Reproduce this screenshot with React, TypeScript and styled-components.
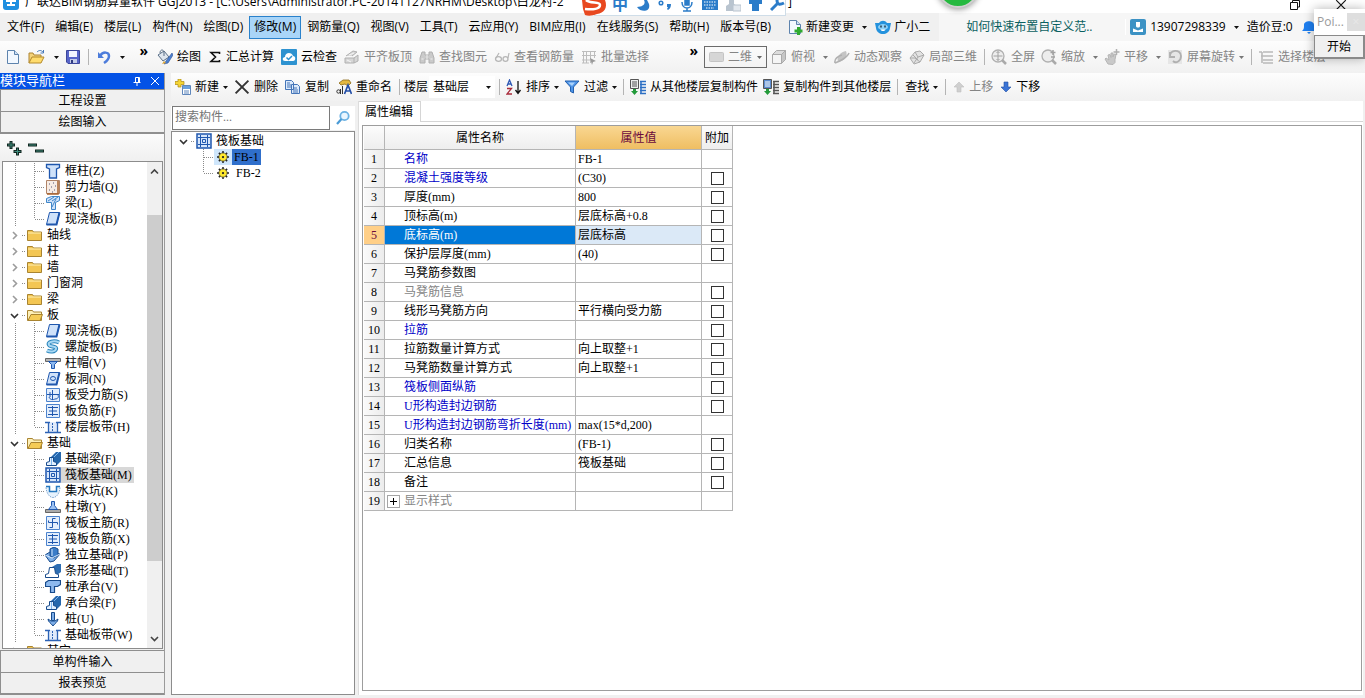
import React from "react";
import styled, { createGlobalStyle, css } from "styled-components";

const UI_FONT = '"Open Sans", "Noto Sans CJK SC", sans-serif';
const SONG_FONT = '"Liberation Serif", "Noto Sans CJK SC", serif';

const GlobalStyle = createGlobalStyle`
  *, *::before, *::after { box-sizing: border-box; }
  body { margin: 0; background: #f0f0f0; color: #000; font: 12px/16px ${UI_FONT}; }
  button, input, select { font: inherit; color: inherit; margin: 0; padding: 0; }
  button { background: none; border: 0; }
  svg { display: block; flex: none; }
`;

/* ---------- shared ---------- */

const Window = styled.div`
  position: relative;
  display: flex;
  flex-direction: column;
  height: 100vh;
  overflow: hidden;
  padding-bottom: 3px;
`;

const Separator = styled.span`
  flex: none;
  width: 1px;
  height: 16px;
  margin: 0 3px;
  background: #b4b4b4;
`;

const Caret = ({ color = "#111" }: { color?: string }) => (
  <svg width="5" height="3" viewBox="0 0 5 3" fill={color}>
    <path d="M0 0h5L2.5 3z" />
  </svg>
);

const Svg = ({ size = 16, children }: { size?: number; children: React.ReactNode }) => (
  <svg width={size} height={size} viewBox="0 0 16 16" fill="none" aria-hidden="true">
    {children}
  </svg>
);

/* ---------- title bar ---------- */

const TitleBar = styled.header`
  display: flex;
  flex: none;
  align-items: flex-end;
  gap: 6px;
  height: 13px;
  padding: 0 18px 2px 3px;
  overflow: hidden;
  background: #fff;
`;

const TitleText = styled.h1`
  flex: 0 0 767px;
  display: flex;
  justify-content: space-between;
  margin: 0;
  font-size: 12px;
  font-weight: 400;
  line-height: 18px;
  white-space: nowrap;
`;

const WindowButtons = styled.div`
  display: flex;
  gap: 34px;
  margin-left: auto;
`;

/* ---------- menu ---------- */

const MenuBar = styled.nav`
  display: flex;
  flex: none;
  align-items: center;
  height: 28px;
  padding-left: 2px;
  background: #f0f0f0;
  white-space: nowrap;
`;

const Menus = styled.div`
  display: flex;
  gap: 1px;
  margin-right: 7px;
`;

const MenuItem = styled.button<{ $active?: boolean }>`
  flex: none;
  height: 23px;
  padding: 0 4px;
  border: 1px solid ${(p) => (p.$active ? "#2a82cc" : "transparent")};
  background: ${(p) => (p.$active ? "#a9d5f8" : "transparent")};
`;

const MenuTool = styled.button`
  display: flex;
  flex: none;
  align-items: center;
  gap: 3px;
  padding: 0 4px;
`;

const AccountArea = styled.div`
  display: flex;
  flex: 1;
  align-items: center;
  align-self: stretch;
  margin-left: 5px;
  background: #f6f6f6;
`;

const HelpLink = styled.a`
  flex: 0 0 187px;
  padding-left: 27px;
  color: #0b6161;
  text-decoration: none;
  border-right: 1px solid #fff;
`;

const Account = styled.div`
  display: flex;
  align-items: center;
  gap: 8px;
  padding-left: 4px;
`;

const AccountName = styled.button`
  display: flex;
  align-items: center;
  gap: 4px;
`;

/* ---------- toolbars ---------- */

const ToolRow = styled.div`
  display: flex;
  flex: none;
  align-items: center;
  height: 32px;
  background: linear-gradient(#fdfdfd, #f1f1f1);
  white-space: nowrap;
  overflow: hidden;
`;

const ToolGroup = styled.div<{ $basis?: number }>`
  display: flex;
  flex: ${(p) => (p.$basis ? `0 0 ${p.$basis}px` : "1 0 auto")};
  align-items: center;
  gap: 1px;
  padding-left: 2px;
`;

const ToolButton = styled.button<{ $muted?: boolean; $tight?: boolean }>`
  display: flex;
  flex: none;
  align-items: center;
  gap: 4px;
  height: 22px;
  padding: 0 ${(p) => (p.$tight ? 2 : 3)}px;
  color: ${(p) => (p.$muted ? "#858585" : "#000")};
`;

const SplitButton = styled(ToolButton)`
  gap: 8px;
  padding: 0 2px 0 3px;
`;

const SplitLabel = styled.span`
  display: flex;
  align-items: center;
  gap: 4px;
`;

const Overflow = styled.button`
  align-self: flex-start;
  margin-left: auto;
  padding-right: 4px;
  font: 700 14px/10px ${UI_FONT};
`;

const ComboBox = styled.label<{ $framed?: boolean }>`
  display: flex;
  flex: none;
  align-items: center;
  gap: 4px;
  height: 22px;
  padding: 0 4px;
  background: ${(p) => (p.$framed ? "transparent" : "#fff")};
  border: ${(p) => (p.$framed ? "1px solid #6b6b6b" : "0")};
  color: ${(p) => (p.$framed ? "#858585" : "#000")};
`;

const ComboSelect = styled.select<{ $width: number }>`
  width: ${(p) => p.$width}px;
  appearance: none;
  border: 0;
  background: transparent;
  opacity: 1;
`;

/* ---------- body ---------- */

const Body = styled.div`
  display: flex;
  flex: 1;
  min-height: 0;
  gap: 6px;
`;

const Sidebar = styled.aside`
  display: flex;
  flex: 0 0 165px;
  flex-direction: column;
  min-height: 0;
  border-right: 1px solid #9a9a9a;
`;

const SidebarTitle = styled.div`
  display: flex;
  flex: none;
  align-items: center;
  justify-content: space-between;
  height: 16px;
  padding-right: 4px;
  background: #0352e6;
  color: #fff;
  font: 13px/16px ${SONG_FONT};
`;

const TitleActions = styled.div`
  display: flex;
  gap: 8px;
`;

const SectionButton = styled.button<{ $current?: boolean }>`
  flex: none;
  height: ${(p) => (p.$current ? 23 : 22)}px;
  background: #f0f0f0;
  border: 1px solid #8f8f8f;
  border-width: 1px 0 ${(p) => (p.$current ? 2 : 0)}px 1px;
  font: 12px/20px ${SONG_FONT};
`;

const TreeTools = styled.div`
  display: flex;
  flex: none;
  align-items: center;
  gap: 6px;
  height: 27px;
  padding-left: 6px;
  background: linear-gradient(#fbfbfb, #f0f0f0);
`;

const TreeFrame = styled.div`
  display: flex;
  flex: 1;
  min-height: 0;
  margin: 0 1px 1px 2px;
  border: 1px solid #8c8c8c;
  background: #fff;
`;

const TreeList = styled.ul`
  flex: 1;
  min-width: 0;
  margin: 0;
  padding: 1px 0 0;
  overflow: hidden;
  list-style: none;
  font: 12px/16px ${SONG_FONT};
`;

const TreeRow = styled.li`
  display: flex;
  align-items: center;
  height: 16px;
  white-space: nowrap;
`;

const TreeLabel = styled.span<{ $tone?: "grey" | "blue" }>`
  padding: 0 2px 0 4px;
  ${(p) => p.$tone === "grey" && css`background: #d8d8d8;`}
  ${(p) => p.$tone === "blue" && css`background: #2f6fcb; padding: 0 2px;`}
`;

const ScrollBar = styled.div`
  display: flex;
  flex: 0 0 15px;
  flex-direction: column;
  background: #f0f0f0;
`;

const ScrollButton = styled.button`
  display: grid;
  flex: 0 0 19px;
  place-items: center;
`;

const ScrollTrack = styled.div`
  display: flex;
  flex: 1;
  flex-direction: column;
  &::before { content: ""; flex: 34; }
  &::after { content: ""; flex: 68; }
`;

const ScrollThumb = styled.div`
  flex: 346;
  background: #cdcdcd;
`;

const Main = styled.main`
  display: flex;
  flex: 1;
  flex-direction: column;
  min-width: 0;
`;

const EditRow = styled(ToolRow)`
  height: 28px;
`;

const Panels = styled.div`
  display: flex;
  flex: 1;
  gap: 3px;
  min-height: 0;
`;

const ComponentPanel = styled.section`
  display: flex;
  flex: 0 0 184px;
  flex-direction: column;
  min-width: 0;
  padding-top: 5px;
`;

const SearchRow = styled.div`
  display: flex;
  flex: none;
  height: 24px;
  margin-bottom: 1px;
  padding-left: 1px;
  background: #fff;
`;

const SearchInput = styled.input`
  flex: 1;
  width: 0;
  min-width: 0;
  padding: 0 2px 2px;
  border: 1px solid #7a7a7a;
  background: #fff;
  font-family: ${SONG_FONT};
  &::placeholder { color: #757575; opacity: 1; }
`;

const SearchButton = styled.button`
  display: grid;
  flex: 0 0 25px;
  place-items: center;
`;

const ComponentTree = styled(TreeList)`
  border: 1px solid #8c8c8c;
  background: #fff;
`;

const SelectedIcon = styled.span<{ $on?: boolean }>`
  padding: 2px 3px;
  background: ${(p) => (p.$on ? "#cfe6fb" : "transparent")};
`;

const PropertyPanel = styled.section`
  display: flex;
  flex: 1;
  flex-direction: column;
  min-width: 0;
  margin-right: 2px;
  border-left: 1px solid #dcdcdc;
  background: #fff;
`;

const Tabs = styled.div`
  display: flex;
  flex: none;
  height: 21px;
  &::after { content: ""; flex: 1; border-bottom: 1px solid #d5d5d5; }
`;

const Tab = styled.button`
  padding: 0 7px 0 6px;
  border: 1px solid #d5d5d5;
  border-width: 1px 1px 0 0;
  background: #fff;
`;

const GridFrame = styled.div`
  flex: 1;
  min-height: 0;
  margin: 3px 1px 4px 3px;
  padding-left: 1px;
  border: 1px solid #9d9d9d;
  overflow: hidden;
`;

const Grid = styled.table`
  border-collapse: separate;
  border-spacing: 0;
  table-layout: fixed;
  width: 369px;
  font: 12px/18px ${SONG_FONT};
  th, td {
    height: 19px;
    padding: 0;
    border: 1px solid #b5b5b5;
    border-width: 0 1px 1px 0;
    font-weight: 400;
    white-space: nowrap;
    overflow: hidden;
  }
  thead th { height: 24px; background: linear-gradient(#fcfcfc, #eeeeee); }
`;

const ValueHead = styled.th`
  && { background: linear-gradient(#f9d792, #efbe62); color: #6b0a3c; }
`;

const IndexCell = styled.th<{ $on: boolean }>`
  background: ${(p) => (p.$on ? "#ffcf87" : "linear-gradient(90deg, #fafafa, #ececec)")};
  color: ${(p) => (p.$on ? "#6b0a3c" : "#000")};
`;

const NameCell = styled.td<{ $on: boolean; $color: string }>`
  background: ${(p) => (p.$on ? "#0078d7" : "#fff")};
  color: ${(p) => (p.$on ? "#fff" : p.$color)};
`;

const NameInner = styled.div`
  display: grid;
  grid-template-columns: 19px 1fr;
  align-items: center;
`;

const ExpandButton = styled.button`
  display: grid;
  place-items: center;
  width: 13px;
  height: 13px;
  margin-left: 2px;
  border: 1px solid #a5a5a5;
  background: #fff;
`;

const ValueCell = styled.td<{ $on: boolean }>`
  && { padding-left: 2px; }
  background: ${(p) => (p.$on ? "#dbe9f7" : "#fff")};
`;

const CheckCell = styled.td`
  text-align: center;
  line-height: 0;
`;

const Check = styled.input`
  appearance: none;
  width: 13px;
  height: 13px;
  border: 1px solid #333;
  background: #fff;
  vertical-align: middle;
  &:checked { background: #333; }
`;

/* ---------- floating pieces over the window ---------- */

const ImeBar = styled.div`
  position: absolute;
  top: 0;
  left: 594px;
  display: flex;
  align-items: flex-start;
  gap: 8px;
  width: 192px;
  height: 16px;
  padding-left: 17px;
  background: #fff;
  border: 1px solid #cfdde8;
  border-top: 0;
  color: #2b7cc9;
`;

const ImeMode = styled.button`
  font: 700 16px/8px ${UI_FONT};
`;

const ImeLogo = styled.div`
  position: absolute;
  top: 0;
  left: 580px;
`;

const GreenBall = styled.div`
  position: absolute;
  top: -34px;
  left: 937px;
  width: 42px;
  height: 42px;
  border: 2px solid #d0d0d0;
  border-radius: 50%;
  background: #25b93f;
  box-shadow: 0 1px 6px rgba(0, 0, 0, 0.45);
`;

const Popup = styled.div`
  position: absolute;
  top: 9px;
  right: 0;
  display: flex;
  flex-direction: column;
  width: 51px;
  background: #fff;
  box-shadow: 0 0 10px rgba(0, 0, 0, 0.3);
`;

const PopupTitle = styled.div`
  display: flex;
  align-items: center;
  justify-content: space-between;
  height: 26px;
  padding-left: 3px;
  color: #9a9a9a;
`;

const PopupClose = styled.button`
  width: 18px;
  height: 18px;
  background: #dedede;
  color: #e8e8e8;
`;

const PopupButton = styled.button`
  height: 24px;
  border: 1px solid #8a8a8a;
  border-width: 1px 2px 2px 1px;
  background: #f0f0f0;
`;

/* ---------- icons ---------- */

const AppLogo = () => (
  <Svg>
    <rect x="0" y="-4" width="16" height="19" rx="3" fill="#1e8fe0" />
    <path d="M3 6h10M8 2v8M4 10h8" stroke="#fff" strokeWidth="2" />
  </Svg>
);
const RestoreIcon = () => (
  <svg width="12" height="12" viewBox="0 0 12 12" fill="none" stroke="#111">
    <path d="M1.500 3.500h7v7h-7zM3.500 3V1.500h7v6.500H9" />
  </svg>
);
const CrossIcon = ({ size = 10, color = "#111", weight = 1 }: { size?: number; color?: string; weight?: number }) => (
  <svg width={size} height={size} viewBox="0 0 10 10" stroke={color} strokeWidth={weight}>
    <path d="M1 1l8 8M9 1L1 9" />
  </svg>
);
const PinIcon = () => (
  <svg width="10" height="10" viewBox="0 0 10 10" stroke="#fff" fill="none">
    <path d="M3.500 6V1.500h4V6M6.500 2v4M1.500 6.500h7M5 7v3" />
  </svg>
);
const NewPageIcon = ({ plus = false }: { plus?: boolean }) => (
  <Svg>
    <path d="M2.500 1.500h7l4 4v9h-11z" fill="#f2f8ff" stroke="#5d83ad" />
    <path d="M9.500 1.500v4h4" fill="#cfe1f5" stroke="#5d83ad" />
    {plus && <path d="M10 8h3v2.500h2.500v3H13V16h-3v-2.500H7.500v-3H10z" fill="#2faa2f" />}
  </Svg>
);
const OpenIcon = () => (
  <svg width="18" height="16" viewBox="0 0 18 16">
    <path d="M1 14V4h4l1 2h7v3" fill="#f4d37a" stroke="#ad8433" />
    <path d="M1 14l3-6h12l-3 6z" fill="#ffdc6e" stroke="#b48a2c" />
    <path d="M9 3c2-2 4-2 6 0M15.500 1v3h-3" fill="none" stroke="#4678b8" />
  </svg>
);
const SaveIcon = () => (
  <Svg>
    <path d="M1.500 1.500h13v13H3l-1.500-1.500z" fill="#5865c9" stroke="#3c479b" />
    <path d="M4 2h8v6H4z" fill="#f3f5ff" />
    <path d="M5 10h7v4H5z" fill="#c4cbe8" />
    <path d="M6 11h2v3H6z" fill="#303b80" />
  </Svg>
);
const UndoIcon = () => (
  <Svg>
    <path d="M2 3v6h6z" fill="#4c7cdb" />
    <path d="M4 7c3-5 9-4 9 0 0 3-2 5-5 7" stroke="#4c7cdb" strokeWidth="2.500" />
  </Svg>
);
const PaintIcon = () => (
  <Svg>
    <path d="M1 6l6-4 5 6-6 4z" fill="#dfe6ee" stroke="#5a6f87" />
    <path d="M3 4c0-4 4-4 4 0v3" stroke="#5a6f87" />
    <path d="M15 4l-6 8-2 3 4-1 5-8z" fill="#4b7fd0" stroke="#2b4f93" strokeWidth=".6" />
    <path d="M7 12l-2 3 4-1z" fill="#e2a834" />
  </Svg>
);
const SigmaIcon = () => (
  <svg width="14" height="16" viewBox="0 0 14 16">
    <path d="M11.500 5V3.500H3L7.500 8 3 12.500h8.500V11" fill="none" stroke="#111" strokeWidth="1.600" />
  </svg>
);
const CloudCheckIcon = () => (
  <Svg>
    <rect width="16" height="16" rx="1" fill="#2d92d0" />
    <path d="M4 12c-3 0-3-4 0-4 0-5 7-5 8-1 3 0 3 5 0 5z" fill="#fff" />
    <path d="M5.500 8.500l2 2 3.500-3.500" stroke="#2d92d0" strokeWidth="1.500" />
  </Svg>
);
const AlignTopIcon = () => (
  <Svg>
    <path d="M2 7l7-5 4 1-5 4M1 9h9v5H1zM10 9l4-3v6l-4 2" fill="#d6d6d6" stroke="#b0b0b0" />
    <path d="M3 11l4 2M5 6l5-2" stroke="#f5f5f5" />
  </Svg>
);
const BinocularsIcon = () => (
  <Svg>
    <path d="M3 3h3v3h4V3h3l2 6v5h-5v-4H6v4H1V9z" fill="#cacaca" stroke="#b0b0b0" />
    <path d="M2.500 10h2M11.500 10h2M8 6v4" stroke="#eee" />
  </Svg>
);
const GlassesIcon = () => (
  <Svg>
    <ellipse cx="4.500" cy="10" rx="3" ry="2.300" stroke="#b6b6b6" strokeWidth="1.300" />
    <ellipse cx="11.500" cy="10" rx="2.500" ry="2.300" stroke="#b6b6b6" strokeWidth="1.300" />
    <path d="M2 9l3-5M14 9l1-5" stroke="#b6b6b6" strokeWidth="1.200" />
  </Svg>
);
const BatchIcon = () => (
  <Svg>
    <path d="M2.500 2v12M5.500 2v12M1 2.500h14M1 6.500h14M9.500 3v11M13.500 3v6M1 11h8M1 14h7" stroke="#bdbdbd" />
    <path d="M9 9l6 3-3 1-1 3z" fill="#999" />
  </Svg>
);
const FlatIcon = () => (
  <svg width="15" height="12" viewBox="0 0 15 12">
    <rect x=".5" y="1.500" width="14" height="9" rx="1" fill="#d6d6d6" stroke="#c4c4c4" />
  </svg>
);
const CubeIcon = () => (
  <Svg>
    <path d="M1.500 5.500l4-4h9l-4 4z" fill="#dcdcdc" stroke="#aaa" />
    <path d="M1.500 5.500h9v9h-9z" fill="#f5f5f5" stroke="#aaa" />
    <path d="M10.500 5.500l4-4v9l-4 4z" fill="#c6c6c6" stroke="#aaa" />
  </Svg>
);
const OrbitIcon = () => (
  <Svg>
    <path d="M4 13c-2-6 3-10 8-11 2 5-1 10-8 11z" fill="#c4c4c4" />
    <path d="M1 14c3-1 12-5 14-10M1 14c-1-4 3-7 7-8" stroke="#b0b0b0" strokeWidth="1.500" />
  </Svg>
);
const LocalCubeIcon = () => (
  <Svg>
    <path d="M1 9l5-6 5-1 4 4-4 7-6 2z" fill="#e2e2e2" stroke="#aaa" />
    <path d="M6 3l3 5 6-2M9 8l-4 6M1 9l5 0 5 4M4 6l5 5" stroke="#aaa" />
  </Svg>
);
const MagnifierIcon = ({ mode }: { mode: "full" | "zoom" }) => (
  <Svg>
    <circle cx="7" cy="7" r="6" fill="#ededed" stroke="#b0b0b0" strokeWidth="1.300" />
    {mode === "full" && <path d="M7 2.500v9M2.500 7h9M5.500 4L7 2.500 8.500 4M5.500 10L7 11.500 8.500 10" stroke="#a2a2a2" />}
    {mode === "zoom" && <path d="M12 1v5M9.500 3.500h5M10 8h4" stroke="#a2a2a2" strokeWidth="1.500" />}
    <path d="M11 11l4 4" stroke="#aaa" strokeWidth="2.500" />
  </Svg>
);
const HandIcon = () => (
  <Svg>
    <path d="M4 15l-3-5 1-1 3 2-1-5 2-.5 1 3V4h2v4l1-3 2 .5-1 5v3l-2 2z" fill="#c9c9c9" stroke="#b5b5b5" />
    <path d="M12.500 0v6M9.500 3h6" stroke="#b0b0b0" strokeWidth="1.500" />
  </Svg>
);
const RotateIcon = () => (
  <Svg>
    <path d="M1 1h14v14H1z" fill="#e6e6e6" />
    <path d="M3 8c-1-8 11-8 11-1 0 5-5 8-8 5M3 3v5h5" stroke="#b0b0b0" strokeWidth="1.800" />
  </Svg>
);
const FloorsIcon = () => (
  <Svg>
    <path d="M5 3h10M3 7h12M5 11h10M5 14h10M1 3h3M4 3v11" stroke="#b9b9b9" strokeWidth="1.600" />
  </Svg>
);
const AddTableIcon = () => (
  <Svg>
    <path d="M3 0h3v2.500h3v3H6V8H3V5.500H0v-3h3z" fill="#f5d535" stroke="#ad8a13" strokeWidth=".7" />
    <path d="M7.500 6.500h8v9h-8z" fill="#fff" stroke="#5f86bb" />
    <path d="M8 7h7v3H8z" fill="#69a0df" />
    <path d="M9 12h5M9 14h5" stroke="#5f86bb" />
  </Svg>
);
const CopyIcon = () => (
  <Svg>
    <path d="M.5 1.500h6l2 2v7h-8zM6.500 5.500h6l2 2v7h-8z" fill="#dceafb" stroke="#4475b8" />
    <path d="M2 4h3M2 6h4M2 8h4M8 9h4M8 11h5M8 13h5" stroke="#4475b8" />
  </Svg>
);
const RenameIcon = () => (
  <Svg>
    <path d="M3 4l4-3h6l2 3-3 3-3-2-4 1z" fill="#e5b940" stroke="#8d6b1a" strokeWidth=".8" />
    <path d="M8.500 15l3.500-9 3.500 9M10 12h4" stroke="#2550a8" strokeWidth="1.700" />
    <circle cx="2.500" cy="12.500" r="1.700" stroke="#333" />
    <path d="M4.500 10v5M6.500 7v8" stroke="#333" />
  </Svg>
);
const SortIcon = () => (
  <Svg>
    <path d="M1 7l2.500-6L6 7M2 5h3" stroke="#2f59b5" strokeWidth="1.300" />
    <path d="M1 9.500h4.500L1 15h5" stroke="#a92b3b" strokeWidth="1.300" />
    <path d="M12 2v12M9.500 11l2.500 3.500 2.500-3.500" stroke="#111" strokeWidth="1.300" />
  </Svg>
);
const FilterIcon = () => (
  <Svg>
    <path d="M1 2h14l-5.500 6v6l-3-1.500V8z" fill="#4d94e8" stroke="#2460ad" />
    <path d="M4 3.500h7L8 7z" fill="#a9d2fb" />
  </Svg>
);
const CopyFloorIcon = ({ out = false }: { out?: boolean }) => (
  <Svg>
    <path d="M.5.5h8v9h-8z" fill={out ? "#5b8bd0" : "#eee"} stroke="#555" />
    <path d="M2 3h5M2 5h5M2 7h5" stroke={out ? "#fff" : "#555"} />
    <path d="M10 2.500h6M10 5.500h6M10 8.500h6M10 11.500h6M10 14.500h6M11 2v13" stroke={out ? "#555" : "#2c6fc4"} strokeWidth="1.500" />
    <path d="M3 10h3v2h2l-3.500 4L1 12h2z" fill="#239a3a" />
  </Svg>
);
const MoveIcon = ({ down = false }: { down?: boolean }) => (
  <svg width="12" height="12" viewBox="0 0 12 12">
    <path
      d={down ? "M6 11l5-5H8V1H4v5H1z" : "M6 1l5 5H8v5H4V6H1z"}
      fill={down ? "#3b74d6" : "#cfcfcf"}
      stroke={down ? "#2450a3" : "#bfbfbf"}
      strokeWidth=".6"
    />
  </svg>
);
const MascotIcon = () => (
  <Svg>
    <path d="M0 4l4 0c2-3 6-3 8 0l4 0-1 5c-1 8-13 8-14 0z" fill="#2492dd" />
    <ellipse cx="8" cy="8" rx="5" ry="3" fill="#8ed0f7" />
    <path d="M6 6.500v2M10 6.500v2" stroke="#123" strokeWidth="1.300" />
    <path d="M5.500 10.500c1 2 4 2 5 0" fill="#fff" />
  </Svg>
);
const UserIcon = () => (
  <Svg>
    <rect width="16" height="16" rx="2" fill="#3c92c4" />
    <path d="M6 3h4v4c0 2-4 2-4 0zM3 13V9.500l5 2 5-2V13z" fill="#fff" />
  </Svg>
);
const BellIcon = () => (
  <Svg>
    <path d="M1 12c2-2 2-3 2-6 0-5 10-5 10 0 0 3 0 4 2 6zM6 13h4l-2 2z" fill="#1f7ff0" />
  </Svg>
);
const SearchIcon = () => (
  <Svg>
    <circle cx="9.500" cy="6" r="4.200" fill="#eaf6ff" stroke="#6cb2e3" strokeWidth="1.800" />
    <path d="M6.500 9L2 14" stroke="#4a9bd6" strokeWidth="2.200" />
  </Svg>
);
const Chevron = ({ dir, color = "#444" }: { dir: "up" | "down" | "right"; color?: string }) => (
  <svg width="9" height="9" viewBox="0 0 9 9" fill="none" stroke={color} strokeWidth="1.600">
    <path d={{ up: "M1 6.500L4.500 3 8 6.500", down: "M1 3l3.500 3.500L8 3", right: "M3 1l3.500 3.500L3 8" }[dir]} />
  </svg>
);
const ExpandAllIcon = () => (
  <Svg>
    <path d="M5 1v8M1 5h8M11.500 7.500v8M7.500 11.500h8" stroke="#10251f" strokeWidth="3" />
    <path d="M5 2v6M2 5h6M11.500 8.500v6M8.500 11.500h6" stroke="#3e8a7b" />
  </Svg>
);
const CollapseAllIcon = () => (
  <Svg>
    <path d="M0 5h9M7 11h9" stroke="#10251f" strokeWidth="3" />
    <path d="M1 5h7M8 11h7" stroke="#3e8a7b" />
  </Svg>
);
const FolderIcon = ({ open }: { open: boolean }) => (
  <Svg>
    <path d="M.5 13.500v-10h5l1 1.500h8v8.500z" fill={open ? "#fdf0b8" : "#f3c653"} stroke="#a98431" />
    {open && <path d="M1 13.500l3-6h11.500l-2.500 6z" fill="#f5cb55" stroke="#a98431" />}
    {!open && <path d="M1 6h13" stroke="#fff0b5" />}
  </Svg>
);
const GearIcon = () => (
  <svg width="12" height="12" viewBox="0 0 16 16">
    <path d="M8 0v16M0 8h16M2.500 2.500l11 11M13.500 2.500l-11 11" stroke="#222" strokeWidth="2" />
    <circle cx="8" cy="8" r="5.500" fill="#ffe92e" stroke="#222" strokeWidth=".8" />
    <circle cx="8" cy="8" r="1.500" fill="#222" />
  </svg>
);

const BLUE = "#1f57ae";
const PALE = "#cfe2fa";
const partIcons: Record<string, React.ReactNode> = {
  column: <path d="M1.500 1.500h13v3l-3 1.500v9h-7V6l-3-1.500z" fill={PALE} stroke={BLUE} strokeWidth="1.300" />,
  wall: (
    <>
      <path d="M1.500 1.500h13v13h-13z" fill="#f7ece4" stroke="#b08468" />
      <path d="M4 5h1M8 4h1M6 8h1M10 7h1M4 11h1M9 11h1M7 13h1" stroke="#557" />
      <path d="M13 2v13H2" stroke="#a8612e" strokeWidth="1.500" />
    </>
  ),
  beam: (
    <>
      <path d="M1.500 3.500l5-2h8v4l-4 2v7h-4v-7h-5z" fill={PALE} stroke="#3f86c9" />
      <path d="M3 6l6-4M7 12l4-8M7 6l6-4" stroke="#3f86c9" />
    </>
  ),
  slab: (
    <>
      <path d="M4.500 1.500h10l-3 12h-10z" fill={PALE} stroke={BLUE} />
      <path d="M1.500 13.500h10l3-12" stroke={BLUE} strokeWidth="2" />
    </>
  ),
  spiral: (
    <>
      <path d="M14 3.500C9 1 2 3 4 6c1 2 8 1 7 4-1 3-6 3-9 1.500" stroke="#2c86bd" strokeWidth="4" />
      <path d="M14 3.500C9 1 2 3 4 6c1 2 8 1 7 4-1 3-6 3-9 1.500" stroke="#a9d9f4" strokeWidth="2" />
    </>
  ),
  cap: (
    <>
      <path d="M.5 3.500h15v3H.5z" fill="#b5b5b5" stroke="#666" />
      <path d="M3.500 6.500h9l-3 3v4h-3v-4z" fill="#8cb8ef" stroke={BLUE} />
    </>
  ),
  hole: (
    <>
      <path d="M4.500 1.500h10l-3 12h-10z" fill={PALE} stroke={BLUE} />
      <path d="M1.500 13.500h10l3-12" stroke={BLUE} strokeWidth="2" />
      <ellipse cx="8" cy="7.500" rx="2.500" ry="2" stroke={BLUE} />
    </>
  ),
  barA: (
    <>
      <path d="M1.500 1.500h13v13h-13z" fill="#e3eefc" stroke="#4c83cd" />
      <path d="M2 7.500h12M7.500 3v10M5 5v5M10 12c3 0 4-2 3-4M4 10c1 3 4 3 6 2" stroke={BLUE} />
    </>
  ),
  barB: (
    <>
      <path d="M1.500 1.500h13v13h-13z" fill="#e3eefc" stroke="#4c83cd" />
      <path d="M7.500 3v10M3 4.500h10M3 11.500h10M4 8h8" stroke={BLUE} />
    </>
  ),
  strip: (
    <>
      <path d="M3 3h10v10H3z" fill="#dfeafb" />
      <path d="M0 3.500h5M11 3.500h5M0 13.500h16M3.500 4v9M12.500 4v9" stroke="#2c62b5" strokeWidth="1.300" />
      <path d="M7.500 4v9" stroke="#2c62b5" strokeDasharray="2 1" />
    </>
  ),
  footBeam: (
    <>
      <path d="M5 7l6-6h5v9l-4 4z" fill="#2567ad" />
      <path d="M1.500 14.500v-3l3-1v-4h4v4l3 1v3z" fill="#e3f0ff" stroke="#174a8b" />
      <path d="M6.500 7v7M9 6l5-5" stroke="#7fb5ed" />
    </>
  ),
  raft: (
    <>
      <path d="M1 1h14v14H1z" fill="#d6e6fb" stroke={BLUE} strokeWidth="1.500" />
      <path d="M4.500 2v12M11.500 2v12M2 4.500h12M2 11.500h12M6.500 6.500h3v3h-3z" stroke={BLUE} />
    </>
  ),
  pit: (
    <>
      <path d="M1 3.500h3.500v5h7v-5H15c0 6-3 11-7 11S1 9 1 3.500z" fill="#e6f2fd" stroke="#7aa3cf" strokeDasharray="1.500 1" />
      <path d="M1 3.500h3.500v5h7v-5H15" stroke="#2478c0" strokeWidth="1.500" />
    </>
  ),
  pier: (
    <>
      <path d="M.5 10.500h15v3H.5z" fill="#aaa" stroke="#666" />
      <path d="M6.500 2.500h3v4l3 4h-9l3-4z" fill="#9ac0f1" stroke={BLUE} />
    </>
  ),
  mainBar: (
    <>
      <path d="M1.500 1.500h13v13h-13z" fill="#e3eefc" stroke="#4c83cd" />
      <path d="M7.500 3.500v9M3.500 7.500h9M7.500 3.500h3M4.500 12.500h3M3.500 7.500v-2M12.500 7.500v2" stroke={BLUE} />
    </>
  ),
  footing: (
    <>
      <path d="M0 8l5-3 10 2-6 7-4 1z" fill="#7fb0e8" stroke="#174a8b" />
      <path d="M5 2l4-2 4 2v6l-4 3-4-2z" fill="#3a7cc8" stroke="#174a8b" />
      <path d="M7 2v7M0 8l7 3 8-4" stroke="#d6e8fc" />
    </>
  ),
  stripFoot: (
    <>
      <path d="M7 4l5-3h4v8l-4 3z" fill="#2d6db2" />
      <path d="M.5 14.500v-3l3-1 1-6h5l1 6 3 1v3z" fill="#fff" stroke="#174a8b" />
    </>
  ),
  pileCap: <path d="M.5 3.500l3-2h12v4l-3 2h-3v6h-4v-6h-5z" fill="#8db9ee" stroke="#174a8b" strokeWidth="1.200" />,
  pile: (
    <>
      <path d="M6.500 1.500h3v8h-3z" fill="#7eaee8" stroke="#174a8b" />
      <path d="M3 8l3 2h4l3-2c0 3-3 4-5 7-2-3-5-4-5-7z" fill="#7eaee8" stroke="#174a8b" />
    </>
  ),
};

/* Dotted connector lines drawn to the left of a tree entry. */
const Guides = ({ last, outer = true }: { last?: boolean; outer?: boolean }) => (
  <svg width="42" height="16" viewBox="0 0 42 16" fill="none" stroke="#8a8a8a" strokeDasharray="1 1">
    {outer && <path d="M12.500 0v16" />}
    <path d={last ? "M31.500 0v8" : "M31.500 0v16"} />
    <path d="M32 8.500h10" />
  </svg>
);

/* ---------- data ---------- */

const menus = ["文件(F)", "编辑(E)", "楼层(L)", "构件(N)", "绘图(D)", "修改(M)", "钢筋量(Q)", "视图(V)", "工具(T)", "云应用(Y)", "BIM应用(I)", "在线服务(S)", "帮助(H)", "版本号(B)"];

type Node = { label: string; icon?: string; open?: boolean; last?: boolean };

const navTree: Node[] = [
  { label: "框柱(Z)", icon: "column" },
  { label: "剪力墙(Q)", icon: "wall" },
  { label: "梁(L)", icon: "beam" },
  { label: "现浇板(B)", icon: "slab", last: true },
  { label: "轴线" },
  { label: "柱" },
  { label: "墙" },
  { label: "门窗洞" },
  { label: "梁" },
  { label: "板", open: true },
  { label: "现浇板(B)", icon: "slab" },
  { label: "螺旋板(B)", icon: "spiral" },
  { label: "柱帽(V)", icon: "cap" },
  { label: "板洞(N)", icon: "hole" },
  { label: "板受力筋(S)", icon: "barA" },
  { label: "板负筋(F)", icon: "barB" },
  { label: "楼层板带(H)", icon: "strip", last: true },
  { label: "基础", open: true },
  { label: "基础梁(F)", icon: "footBeam" },
  { label: "筏板基础(M)", icon: "raft" },
  { label: "集水坑(K)", icon: "pit" },
  { label: "柱墩(Y)", icon: "pier" },
  { label: "筏板主筋(R)", icon: "mainBar" },
  { label: "筏板负筋(X)", icon: "barB" },
  { label: "独立基础(P)", icon: "footing" },
  { label: "条形基础(T)", icon: "stripFoot" },
  { label: "桩承台(V)", icon: "pileCap" },
  { label: "承台梁(F)", icon: "footBeam" },
  { label: "桩(U)", icon: "pile" },
  { label: "基础板带(W)", icon: "strip", last: true },
  { label: "其它" },
];

const KEY = "#0000c8";
type Prop = { name: string; value?: string; color?: string; check?: boolean; group?: boolean };

const properties: Prop[] = [
  { name: "名称", value: "FB-1", color: KEY },
  { name: "混凝土强度等级", value: "(C30)", color: KEY, check: true },
  { name: "厚度(mm)", value: "800", check: true },
  { name: "顶标高(m)", value: "层底标高+0.8", check: true },
  { name: "底标高(m)", value: "层底标高", check: true },
  { name: "保护层厚度(mm)", value: "(40)", check: true },
  { name: "马凳筋参数图" },
  { name: "马凳筋信息", color: "#858585", check: true },
  { name: "线形马凳筋方向", value: "平行横向受力筋", check: true },
  { name: "拉筋", color: KEY, check: true },
  { name: "拉筋数量计算方式", value: "向上取整+1", check: true },
  { name: "马凳筋数量计算方式", value: "向上取整+1", check: true },
  { name: "筏板侧面纵筋", color: KEY, check: true },
  { name: "U形构造封边钢筋", color: KEY, check: true },
  { name: "U形构造封边钢筋弯折长度(mm)", value: "max(15*d,200)", color: KEY },
  { name: "归类名称", value: "(FB-1)", check: true },
  { name: "汇总信息", value: "筏板基础", check: true },
  { name: "备注", check: true },
  { name: "显示样式", color: "#858585", group: true },
];

/* ---------- parts ---------- */

const Folder = styled.span`
  display: flex;
  align-items: center;
  gap: 1px;
  padding-left: 7px;
`;

const Dash = () => (
  <svg width="6" height="16" viewBox="0 0 6 16" stroke="#8a8a8a" strokeDasharray="1 1">
    <path d="M2 8.500h4" />
  </svg>
);

const NavEntry = ({ node, selected }: { node: Node; selected: boolean }) =>
  node.icon ? (
    <TreeRow>
      <Guides last={node.last} />
      <Svg>{partIcons[node.icon]}</Svg>
      <TreeLabel $tone={selected ? "grey" : undefined}>{node.label}</TreeLabel>
    </TreeRow>
  ) : (
    <TreeRow>
      <Folder>
        <Chevron dir={node.open ? "down" : "right"} color={node.open ? "#333" : "#9c9c9c"} />
        <Dash />
        <FolderIcon open={!!node.open} />
      </Folder>
      <TreeLabel>{node.label}</TreeLabel>
    </TreeRow>
  );

const PropertyGrid = () => (
  <Grid>
    <colgroup>
      <col style={{ width: 21 }} />
      <col style={{ width: 191 }} />
      <col style={{ width: 126 }} />
      <col style={{ width: 31 }} />
    </colgroup>
    <thead>
      <tr>
        <th aria-label="序号" />
        <th scope="col">属性名称</th>
        <ValueHead scope="col">属性值</ValueHead>
        <th scope="col">附加</th>
      </tr>
    </thead>
    <tbody>
      {properties.map((p, i) => {
        const on = i === 4;
        return (
          <tr key={p.name}>
            <IndexCell scope="row" $on={on}>{i + 1}</IndexCell>
            <NameCell $on={on} $color={p.color ?? "#000"}>
              <NameInner>
                <span>
                  {p.group && (
                    <ExpandButton aria-label="展开">
                      <svg width="7" height="7" viewBox="0 0 7 7" stroke="#000"><path d="M0 3.500h7M3.500 0v7" /></svg>
                    </ExpandButton>
                  )}
                </span>
                {p.name}
              </NameInner>
            </NameCell>
            <ValueCell $on={on}>{p.value}</ValueCell>
            <CheckCell>{p.check && <Check type="checkbox" aria-label={p.name} />}</CheckCell>
          </tr>
        );
      })}
    </tbody>
  </Grid>
);

export default function App() {
  return (
    <Window>
      <GlobalStyle />
      <TitleBar>
        <AppLogo />
        <TitleText>
          <span>广联达BIM钢筋算量软件 GGJ2013 - [C:\Users\Administrator.PC-20141127NRHM\Desktop\白龙村-2</span>
          <span>]</span>
        </TitleText>
        <WindowButtons>
          <button aria-label="还原"><RestoreIcon /></button>
          <button aria-label="关闭"><CrossIcon size={12} /></button>
        </WindowButtons>
      </TitleBar>

      <MenuBar>
        <Menus>
          {menus.map((m) => (
            <MenuItem key={m} $active={m === "修改(M)"}>{m}</MenuItem>
          ))}
        </Menus>
        <MenuTool><NewPageIcon plus />新建变更</MenuTool>
        <MenuTool aria-label="更多变更"><Caret /></MenuTool>
        <MenuTool><MascotIcon />广小二</MenuTool>
        <AccountArea>
          <HelpLink href="#help">如何快速布置自定义范..</HelpLink>
          <Account>
            <AccountName><UserIcon />13907298339</AccountName>
            <Caret />
            <span>造价豆:0</span>
            <BellIcon />
          </Account>
        </AccountArea>
      </MenuBar>

      <ToolRow>
        <ToolGroup $basis={152}>
          <ToolButton aria-label="新建"><NewPageIcon /></ToolButton>
          <SplitButton aria-label="打开"><OpenIcon /><Caret /></SplitButton>
          <ToolButton aria-label="保存"><SaveIcon /></ToolButton>
          <Separator />
          <SplitButton aria-label="撤销"><UndoIcon /><Caret /></SplitButton>
          <Overflow aria-label="更多">»</Overflow>
        </ToolGroup>
        <ToolGroup $basis={550}>
          <ToolButton><PaintIcon />绘图</ToolButton>
          <ToolButton><SigmaIcon />汇总计算</ToolButton>
          <ToolButton><CloudCheckIcon />云检查</ToolButton>
          <ToolButton $muted><AlignTopIcon />平齐板顶</ToolButton>
          <ToolButton $muted><BinocularsIcon />查找图元</ToolButton>
          <ToolButton $muted><GlassesIcon />查看钢筋量</ToolButton>
          <ToolButton $muted><BatchIcon />批量选择</ToolButton>
          <Overflow aria-label="更多">»</Overflow>
        </ToolGroup>
        <ToolGroup>
          <ComboBox $framed>
            <FlatIcon />
            <ComboSelect $width={25} disabled aria-label="视图模式"><option>二维</option></ComboSelect>
            <Caret color="#666" />
          </ComboBox>
          <SplitButton $muted><SplitLabel><CubeIcon />俯视</SplitLabel><Caret color="#777" /></SplitButton>
          <ToolButton $muted><OrbitIcon />动态观察</ToolButton>
          <ToolButton $muted><LocalCubeIcon />局部三维</ToolButton>
          <Separator />
          <ToolButton $muted $tight><MagnifierIcon mode="full" />全屏</ToolButton>
          <SplitButton $muted><SplitLabel><MagnifierIcon mode="zoom" />缩放</SplitLabel><Caret color="#777" /></SplitButton>
          <SplitButton $muted><SplitLabel><HandIcon />平移</SplitLabel><Caret color="#777" /></SplitButton>
          <ToolButton $muted><RotateIcon />屏幕旋转<Caret color="#777" /></ToolButton>
          <Separator />
          <ToolButton $muted $tight><FloorsIcon />选择楼层</ToolButton>
        </ToolGroup>
      </ToolRow>

      <Body>
        <Sidebar>
          <SidebarTitle>
            模块导航栏
            <TitleActions>
              <button aria-label="固定"><PinIcon /></button>
              <button aria-label="关闭"><CrossIcon color="#fff" /></button>
            </TitleActions>
          </SidebarTitle>
          <SectionButton>工程设置</SectionButton>
          <SectionButton $current>绘图输入</SectionButton>
          <TreeTools>
            <button aria-label="全部展开"><ExpandAllIcon /></button>
            <button aria-label="全部折叠"><CollapseAllIcon /></button>
          </TreeTools>
          <TreeFrame>
            <TreeList>
              {navTree.map((n, i) => (
                <NavEntry key={i} node={n} selected={n.label === "筏板基础(M)"} />
              ))}
            </TreeList>
            <ScrollBar>
              <ScrollButton aria-label="向上滚动"><Chevron dir="up" /></ScrollButton>
              <ScrollTrack><ScrollThumb /></ScrollTrack>
              <ScrollButton aria-label="向下滚动"><Chevron dir="down" /></ScrollButton>
            </ScrollBar>
          </TreeFrame>
          <SectionButton>单构件输入</SectionButton>
          <SectionButton $current>报表预览</SectionButton>
        </Sidebar>

        <Main>
          <EditRow>
            <ToolGroup>
              <ToolButton $tight><AddTableIcon />新建<Caret /></ToolButton>
              <ToolButton><CrossIcon size={16} color="#333" weight={1.2} />删除</ToolButton>
              <ToolButton><CopyIcon />复制</ToolButton>
              <ToolButton><RenameIcon />重命名</ToolButton>
              <Separator />
              <span>楼层</span>
              <ComboBox>
                <ComboSelect $width={49} aria-label="楼层"><option>基础层</option></ComboSelect>
                <Caret />
              </ComboBox>
              <Separator />
              <ToolButton $tight><SortIcon />排序<Caret /></ToolButton>
              <ToolButton $tight><FilterIcon />过滤<Caret /></ToolButton>
              <Separator />
              <ToolButton $tight><CopyFloorIcon />从其他楼层复制构件</ToolButton>
              <ToolButton $tight><CopyFloorIcon out />复制构件到其他楼层</ToolButton>
              <Separator />
              <ToolButton>查找<Caret /></ToolButton>
              <Separator />
              <ToolButton $muted><MoveIcon />上移</ToolButton>
              <ToolButton><MoveIcon down />下移</ToolButton>
            </ToolGroup>
          </EditRow>

          <Panels>
            <ComponentPanel>
              <SearchRow>
                <SearchInput type="text" placeholder="搜索构件..." aria-label="搜索构件" />
                <SearchButton aria-label="搜索"><SearchIcon /></SearchButton>
              </SearchRow>
              <ComponentTree>
                <TreeRow>
                  <Folder><Chevron dir="down" color="#333" /><Dash /><Svg>{partIcons.raft}</Svg></Folder>
                  <TreeLabel>筏板基础</TreeLabel>
                </TreeRow>
                <TreeRow>
                  <Guides outer={false} />
                  <SelectedIcon $on><GearIcon /></SelectedIcon>
                  <TreeLabel $tone="blue">FB-1</TreeLabel>
                </TreeRow>
                <TreeRow>
                  <Guides outer={false} last />
                  <SelectedIcon><GearIcon /></SelectedIcon>
                  <TreeLabel>FB-2</TreeLabel>
                </TreeRow>
              </ComponentTree>
            </ComponentPanel>

            <PropertyPanel>
              <Tabs><Tab>属性编辑</Tab></Tabs>
              <GridFrame><PropertyGrid /></GridFrame>
            </PropertyPanel>
          </Panels>
        </Main>
      </Body>

      <ImeBar>
        <ImeMode>中</ImeMode>
        <svg width="14" height="12" viewBox="0 0 14 12"><path d="M8 0c2 4-1 7-7 7 4 6 14 5 12-3l-2-4z" fill="#2b7cc9" /></svg>
        <svg width="14" height="12" viewBox="0 0 14 12"><circle cx="3" cy="3" r="1.800" fill="none" stroke="#2b7cc9" strokeWidth="1.500" /><path d="M9 4h4c0 3-1 5-3 6l-1-1 1-2H9z" fill="#2b7cc9" /></svg>
        <svg width="14" height="12" viewBox="0 0 14 12" fill="none" stroke="#2b7cc9" strokeWidth="1.500"><path d="M5 0h4v5H5z" fill="#2b7cc9" /><path d="M2 2c0 8 10 8 10 0M7 8v3M3 11h8" /></svg>
        <svg width="16" height="12" viewBox="0 0 16 12"><path d="M0 0h16v10H0z" fill="#2b7cc9" /><path d="M2 2h12M2 5h12M4 8h8" stroke="#fff" strokeWidth="1.200" strokeDasharray="1.500 1" /></svg>
        <svg width="15" height="12" viewBox="0 0 15 12"><path d="M3 0h5v4l3 2v5H0V6l3-2z" fill="#b9c4cf" /><path d="M7 5h8v6H7z" fill="#e3e8ee" stroke="#b9c4cf" /></svg>
        <svg width="13" height="12" viewBox="0 0 13 12"><path d="M0 0h13v4h-3v7H3V4H0z" fill="#2b7cc9" /></svg>
        <svg width="15" height="12" viewBox="0 0 15 12"><path d="M1 10l7-7M7 0c0 5 3 5 7 3" fill="none" stroke="#2b7cc9" strokeWidth="3" /></svg>
      </ImeBar>
      <ImeLogo>
        <svg width="28" height="16" viewBox="0 0 28 16" fill="none">
          <path d="M2 0h23c3 8-1 13-8 14-5 2-9 2-12 1L3 9z" fill="#e8481f" />
          <path d="M6 0c4 4 14 1 14 5s-7 5-15 4" stroke="#fff" strokeWidth="2.500" />
        </svg>
      </ImeLogo>
      <GreenBall />
      <Popup>
        <PopupTitle>Poi...<PopupClose aria-label="关闭">×</PopupClose></PopupTitle>
        <PopupButton>开始</PopupButton>
      </Popup>
    </Window>
  );
}
